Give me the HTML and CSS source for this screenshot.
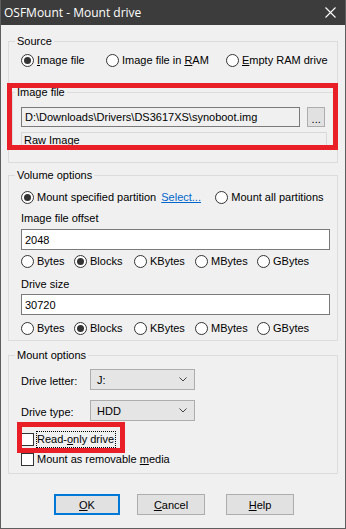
FILE: index.html
```html
<!DOCTYPE html>
<html lang="en">
<head>
  <meta charset="UTF-8" />
  <title>OSFMount - Mount drive</title>
  <link rel="stylesheet" href="styles.css">
</head>
<body>
  <div class="window">
    <div class="titlebar">
      <span class="title">OSFMount - Mount drive</span>
      <svg class="close" width="11" height="11" viewBox="0 0 11 11">
        <path d="M0.5 0.5 L10.5 10.5 M10.5 0.5 L0.5 10.5" stroke="#fff" stroke-width="1.1" fill="none" />
      </svg>
    </div>

    <div class="content">
      <fieldset class="group source">
        <legend>Source</legend>
        <div class="row src-row">
          <label class="opt w85"><span class="radio on"></span><span><u>I</u>mage file</span></label>
          <label class="opt w120"><span class="radio"></span><span>Image file in <u>R</u>AM</span></label>
          <label class="opt"><span class="radio"></span><span><u>E</u>mpty RAM drive</span></label>
        </div>

        <fieldset class="group imgfile">
          <legend>Image file</legend>
          <div class="path-row">
            <div class="edit ro path">D:\Downloads\Drivers\DS3617XS\synoboot.img</div>
            <div class="browse">...</div>
          </div>
          <div class="edit info">Raw Image</div>
        </fieldset>
      </fieldset>

      <fieldset class="group volume">
        <legend>Volume options</legend>
        <div class="row part-row">
          <label class="opt"><span class="radio on"></span><span>Mount specified partition</span></label>
          <a class="link">Select...</a>
          <label class="opt all"><span class="radio"></span><span>Mount all partitions</span></label>
        </div>

        <div class="field-label first">Image file offset</div>
        <div class="edit value">2048</div>
        <div class="row units u1">
          <label class="opt w53"><span class="radio"></span><span>Bytes</span></label>
          <label class="opt w60"><span class="radio on"></span><span>Blocks</span></label>
          <label class="opt w61"><span class="radio"></span><span>KBytes</span></label>
          <label class="opt w62"><span class="radio"></span><span>MBytes</span></label>
          <label class="opt"><span class="radio"></span><span>GBytes</span></label>
        </div>

        <div class="field-label second">Drive size</div>
        <div class="edit value v2">30720</div>
        <div class="row units u2">
          <label class="opt w53"><span class="radio"></span><span>Bytes</span></label>
          <label class="opt w60"><span class="radio on"></span><span>Blocks</span></label>
          <label class="opt w61"><span class="radio"></span><span>KBytes</span></label>
          <label class="opt w62"><span class="radio"></span><span>MBytes</span></label>
          <label class="opt"><span class="radio"></span><span>GBytes</span></label>
        </div>
      </fieldset>

      <fieldset class="group mount">
        <legend>Mount options</legend>
        <div class="combo-row">
          <span class="combo-label">Drive letter:</span>
          <div class="combo"><span>J:</span><svg width="8" height="5" viewBox="0 0 8 5"><path d="M0.5 0.5 L4 4 L7.5 0.5" stroke="#444" fill="none" /></svg></div>
        </div>
        <div class="combo-row second">
          <span class="combo-label">Drive type:</span>
          <div class="combo"><span>HDD</span><svg width="8" height="5" viewBox="0 0 8 5"><path d="M0.5 0.5 L4 4 L7.5 0.5" stroke="#444" fill="none" /></svg></div>
        </div>
        <label class="opt check-row readonly"><span class="check"></span><span class="focus">Read-<u>o</u>nly drive</span></label>
        <label class="opt check-row removable"><span class="check"></span><span>Mount as removable <u>m</u>edia</span></label>
      </fieldset>

      <div class="buttons">
        <button class="btn default"><u>O</u>K</button>
        <button class="btn cancel"><u>C</u>ancel</button>
        <button class="btn help"><u>H</u>elp</button>
      </div>
    </div>

    <div class="mark mark-file"></div>
    <div class="mark mark-ro"></div>
  </div>
</body>
</html>
```

FILE: styles.css
```css
* { box-sizing: border-box; }
body { margin: 0; background: #f0f0f0; }
.window { position: relative; width: 346px; height: 529px; background: #f0f0f0; border: 1px solid #5e5e5e; border-top: none; font-family: "Liberation Sans", Arial, sans-serif; font-size: 11px; line-height: 14px; color: #000; overflow: hidden; }
.titlebar { height: 25px; background: #3c3c3c; display: flex; align-items: center; justify-content: space-between; padding: 0 10px 0 4px; margin: 0 -1px; }
.title { font-family: "Open Sans", "Noto Sans", sans-serif; font-size: 12px; color: #fff; }
.close { display: block; }

.content { padding: 9px 7px 0 7px; }
u { text-decoration: underline; text-underline-offset: 1px; }

.group { margin: 0; border: 1px solid #dcdcdc; min-width: 0; }
.group legend { padding: 0 2px; margin-left: -6px; line-height: 14px; }

.row { display: flex; align-items: center; height: 14px; }
.opt { display: flex; align-items: center; gap: 3px; white-space: nowrap; height: 14px; }
.w85 { width: 85px; }
.w120 { width: 120px; }
.w53 { width: 53px; }
.w60 { width: 60px; }
.w61 { width: 61px; }
.w62 { width: 62px; }

.radio { width: 13px; height: 13px; border: 1px solid #333; border-radius: 50%; background: #fff; display: flex; align-items: center; justify-content: center; flex: none; }
.radio.on::after { content: ""; width: 7px; height: 7px; border-radius: 50%; background: #333; }
.check { width: 13px; height: 13px; border: 1px solid #333; background: #fff; flex: none; }

/* source */
.source { padding: 5px 3px 14px 3px; }
.source > legend { margin-left: 3px; }
.src-row { padding-left: 9px; }
.imgfile { margin-top: 18px; padding: 8px 8px 0 8px; }
.imgfile > legend { margin-left: -6px; }
.path-row { display: flex; gap: 7px; }
.edit { height: 21px; border: 1px solid #7a7a7a; background: #fff; padding: 0 3px; display: flex; align-items: center; white-space: nowrap; overflow: hidden; }
.edit.ro { background: #f0f0f0; }
.path { width: 285px; height: 20px; }
.browse { width: 18px; height: 20px; border: 1px solid #adadad; background: #e1e1e1; display: flex; align-items: flex-end; justify-content: center; padding-bottom: 3px; line-height: 8px; }
.info { width: 306px; height: 15px; margin-top: 5px; background: #f0f0f0; border-color: #d9d9d9; border-bottom: none; align-items: flex-start; padding: 0 2px; }

/* volume */
.volume { margin-top: 5px; padding: 8px 6px 5px 12px; }
.link { color: #0066cc; text-decoration: underline; margin-left: 5px; width: 54px; }
.field-label.first { margin-top: 7px; }
.field-label.second { margin-top: 9px; }
.value { width: 309px; margin-top: 4px; }
.value.v2 { margin-top: 3px; }
.units.u1 { margin-top: 4px; }
.units.u2 { margin-top: 6px; }

/* mount */
.mount { margin-top: 7px; padding: 7px 6px 7px 12px; }
.combo-row { display: flex; align-items: center; }
.combo-row.second { margin-top: 10px; }
.combo-label { width: 69px; padding-top: 3px; }
.combo { width: 105px; height: 21px; border: 1px solid #adadad; background: #e5e5e5; display: flex; align-items: center; justify-content: space-between; padding: 0 7px 0 6px; }
.check-row.readonly { margin-top: 11px; }
.check-row.removable { margin-top: 6px; }
.focus { outline: 1px dotted #000; outline-offset: 0; padding: 0 1px 1px 0; }

/* buttons */
.buttons { display: flex; margin-top: 20px; }
.btn { height: 21px; width: 66px; border: 1px solid #adadad; background: #e1e1e1; font: inherit; color: #000; padding: 0; }
.btn.default { margin-left: 46px; border: 2px solid #0078d7; }
.btn.cancel { margin-left: 17px; width: 68px; }
.btn.help { margin-left: 21px; width: 68px; }

/* annotation frames */
.mark { position: absolute; border: 5px solid #e81f27; }
.mark-file { left: 6px; top: 83px; width: 331px; height: 67px; }
.mark-ro { left: 16px; top: 422px; width: 108px; height: 31px; }
```
